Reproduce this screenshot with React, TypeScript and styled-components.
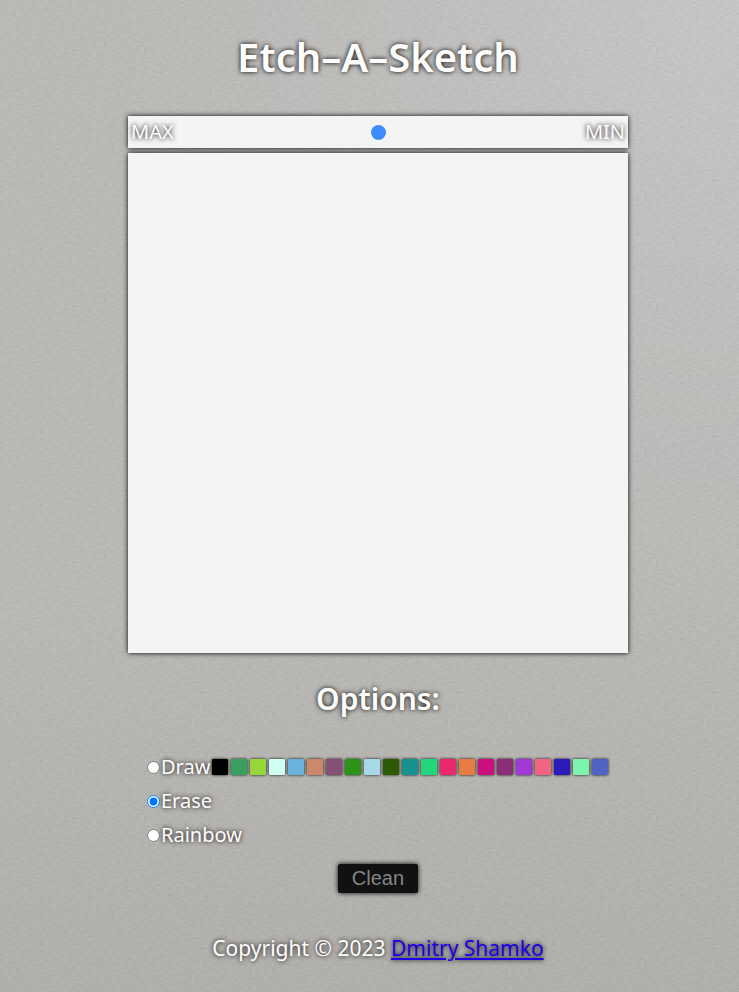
import React, { useState } from "react";
import styled, { createGlobalStyle } from "styled-components";

const grain = encodeURIComponent(
  `<svg xmlns="http://www.w3.org/2000/svg" width="256" height="256"><filter id="g" x="0" y="0" width="100%" height="100%" color-interpolation-filters="sRGB"><feTurbulence type="fractalNoise" baseFrequency="0.25 0.5" numOctaves="3" seed="4" stitchTiles="stitch"/><feColorMatrix type="matrix" values="1 1 0 0 -0.3  1 1 0 0 -0.3  1 1 0 0 -0.3  0 0 0 0 0.05"/></filter><rect width="256" height="256" filter="url(#g)"/></svg>`
);

const GlobalStyle = createGlobalStyle`
  *, *::before, *::after { box-sizing: border-box; }
  body {
    margin: 0;
    color: #fffcfc;
    font-family: "Lucida Sans", "Noto Sans", "Open Sans", sans-serif;
    font-size: 20px;
    line-height: 24px;
    text-shadow: 0 0 5px #000;
  }
`;

const Page = styled.div`
  min-height: 100vh;
  display: flex;
  flex-direction: column;
  align-items: center;
  padding: 32px 0 32px 17px;
  background-color: #b9b8b4;
  background-image: url("data:image/svg+xml,${grain}"),
    radial-gradient(circle at 100% 0%, rgba(205, 205, 208, 0.65), transparent 50%),
    linear-gradient(180deg, #bab9b5, #b9b8b4 60%, #b0afab);
`;

const Title = styled.h1`
  margin: 0 0 34px;
  font-size: 40px;
  font-weight: 600;
  line-height: 50px;
`;

const Board = styled.main`
  display: flex;
  flex-direction: column;
  align-items: center;
  gap: 5px;
  width: 100%;
  max-width: 500px;
`;

const Panel = styled.div`
  width: 100%;
  background: #f4f4f4;
  box-shadow: 0 0 5px #000;
`;

const SizeBar = styled(Panel)`
  display: flex;
  align-items: center;
  justify-content: space-between;
  height: 32px;
  padding: 0 3px;
`;

const Slider = styled.input`
  appearance: none;
  flex: 1;
  min-width: 0;
  height: 16px;
  margin: 0 10px 0 8px;
  background: transparent;

  &::-webkit-slider-thumb {
    appearance: none;
    width: 15px;
    height: 15px;
    border-radius: 50%;
    background: #3c8eff;
  }
`;

const Canvas = styled(Panel)`
  aspect-ratio: 1;
`;

const OptionsTitle = styled.h2`
  margin: 26px 0 36px;
  font-size: 30px;
  font-weight: 600;
  line-height: 40px;
`;

const Options = styled.form`
  display: flex;
  flex-direction: column;
  gap: 10px;
  width: 100%;
  max-width: 500px;
  padding-left: 19px;
`;

const OptionRow = styled.div`
  display: flex;
  align-items: center;
  height: 24px;
`;

const OptionLabel = styled.label`
  display: flex;
  align-items: center;
  gap: 1px;
`;

const Radio = styled.input`
  width: 13px;
  height: 13px;
  margin: 0;
`;

const Palette = styled.div`
  display: flex;
  gap: 3px;
  margin-left: 2px;
`;

const Swatch = styled.button<{ $color: string }>`
  width: 16px;
  height: 16px;
  padding: 0;
  border: 0;
  border-radius: 1px;
  background: ${(p) => p.$color};
  box-shadow: 0 0 3px #000;
`;

const CleanButton = styled.button`
  height: 29px;
  width: 80px;
  margin-top: 17px;
  padding: 0;
  border: 0;
  border-radius: 2px;
  background: #111;
  color: #858585;
  font: 20px/29px "Liberation Sans", Arial, sans-serif;
  box-shadow: 0 0 5px #000;
`;

const Footer = styled.footer`
  margin-top: 43px;
  font-size: 21px;
`;

const AuthorLink = styled.a`
  color: #1c00e8;
`;

const colors = [
  "#000000", "#38a15f", "#95d63a", "#d0fff3", "#69b2dc", "#cd8769", "#875076",
  "#2c9218", "#a7d8e6", "#2d5a05", "#199191", "#23d67b", "#e9296d", "#e77c42",
  "#cb1080", "#8b2d77", "#a339d5", "#f0647f", "#2d1bb9", "#7cf3ae", "#5363c3",
];

export default function App() {
  const [mode, setMode] = useState("Erase");
  const [size, setSize] = useState(50);

  return (
    <>
      <GlobalStyle />
      <Page>
        <Title>Etch–A–Sketch</Title>
        <Board>
          <SizeBar>
            <span>MAX</span>
            <Slider
              type="range"
              aria-label="Grid size"
              value={size}
              onChange={(e) => setSize(Number(e.target.value))}
            />
            <span>MIN</span>
          </SizeBar>
          <Canvas />
        </Board>
        <OptionsTitle>Options:</OptionsTitle>
        <Options>
          {["Draw", "Erase", "Rainbow"].map((name) => (
            <OptionRow key={name}>
              <OptionLabel>
                <Radio
                  type="radio"
                  name="mode"
                  checked={mode === name}
                  onChange={() => setMode(name)}
                />
                {name}
              </OptionLabel>
              {name === "Draw" && (
                <Palette>
                  {colors.map((c) => (
                    <Swatch key={c} type="button" $color={c} aria-label={c} />
                  ))}
                </Palette>
              )}
            </OptionRow>
          ))}
        </Options>
        <CleanButton type="button">Clean</CleanButton>
        <Footer>
          Copyright © 2023 <AuthorLink href="#">Dmitry Shamko</AuthorLink>
        </Footer>
      </Page>
    </>
  );
}
